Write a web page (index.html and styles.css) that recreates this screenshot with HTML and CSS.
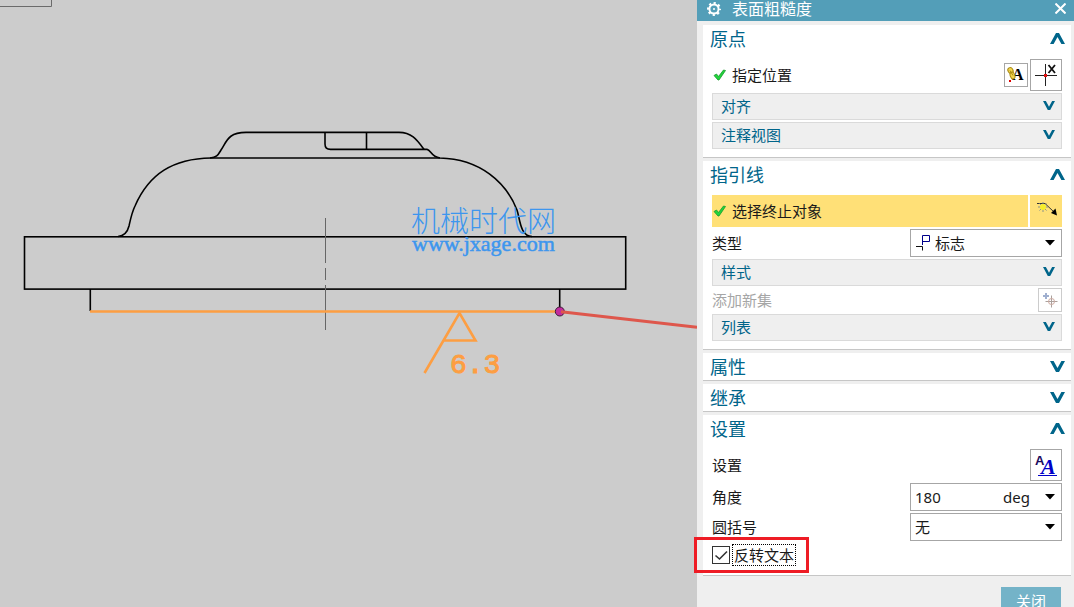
FILE: index.html
```html
<!DOCTYPE html>
<html lang="zh-CN">
<head>
  <meta charset="UTF-8" />
  <title>表面粗糙度</title>
  <link rel="stylesheet" href="styles.css">
</head>
<body>
  <!-- shared shapes -->
  <svg class="symbols" aria-hidden="true">
    <symbol id="chevron" viewBox="0 0 15 11">
      <path d="M0 0h3.600l3.900 7L11.400 0H15L9 11H6z" />
    </symbol>
    <symbol id="check" viewBox="0 0 13 12">
      <path d="M1 6.500L3.500 5l2 2.500L10.500 1 12.500 1.500 6 11H5z" fill="#22d43c" stroke="#159a2b" stroke-width="0.800" />
    </symbol>
    <symbol id="caret" viewBox="0 0 10 6">
      <path d="M0 0h10L5 5.500z" />
    </symbol>
  </svg>

  <main class="canvas">
    <svg class="drawing" viewBox="0 0 697 607" preserveAspectRatio="xMinYMin meet">
      <path class="frame" d="M0 6.500H51.500V0" />

      <!-- part outline -->
      <g class="outline">
        <rect x="24.500" y="236.800" width="601.200" height="52.300" />
        <path d="M90.300 289V311M559.700 289V308" />
        <path d="M118 236.500C124 236 127.500 232 129 226C131 217 132 212 135 206C149 174 173 158.500 211 158H440" />
        <path d="M210 158C217 157.500 218 155 221 150C227 141 228 132.500 246 132.400H399C412 132.400 417 140 424 149.300" />
        <path d="M325 132.400V144Q325 149.400 330.500 149.400H427C431 150 431 157 440 158C480 159 506 182 517 210C520 219 520 236 532 236.500" />
        <path d="M366.500 132.400V149.400" />
      </g>
      <path class="center-line" d="M325.500 218V263M325.500 268V280M325.500 285V330" />

      <!-- watermark -->
      <text class="mark-name" x="411" y="232">机械时代网</text>
      <text class="mark-url" x="412" y="251">www.jxage.com</text>

      <!-- roughness symbol and leader -->
      <path class="rough" d="M90 311.500H559" />
      <path class="rough" d="M424.500 373L459.500 313L475.500 340.500H443.500" />
      <text class="rough-value" x="450" y="373">6.3</text>
      <circle cx="559.800" cy="311.500" r="4.500" fill="#c22c9f" stroke="#3c2038" />
      <path d="M561 311.800L697 327.300" stroke="#de574c" stroke-width="3" />
    </svg>
  </main>

  <aside class="panel">
    <header class="panel-title">
      <svg class="gear" viewBox="0 0 14 14">
        <circle cx="7" cy="7" r="4.600" fill="none" stroke="#fff" stroke-width="2" />
        <circle cx="7" cy="7" r="6" fill="none" stroke="#fff" stroke-width="2" stroke-dasharray="2.200 2.512" stroke-dashoffset="1.100" />
        <circle cx="7" cy="7" r="1" fill="#fff" />
      </svg>
      <h1>表面粗糙度</h1>
      <button class="close-x" aria-label="关闭窗口">
        <svg viewBox="0 0 11 11"><path d="M.500 .500l10 10M10.500 .500l-10 10" stroke="#fff" stroke-width="2" /></svg>
      </button>
    </header>

    <div class="panel-body">
      <section class="group">
        <button class="group-head">原点<svg class="chevron up"><use href="#chevron" /></svg></button>
        <div class="rows">
          <div class="row">
            <span class="step"><svg class="check"><use href="#check" /></svg>指定位置</span>
            <button class="icon-btn small" aria-label="关联注释">
              <svg viewBox="0 0 22 22">
                <text class="glyph-serif" x="7" y="16" font-size="16">A</text>
                <g fill="#f1d44c" stroke="#a98a12">
                  <ellipse cx="5.500" cy="6.500" rx="2.500" ry="3" transform="rotate(-30 5.500 6.500)" />
                  <ellipse cx="7.500" cy="11.500" rx="2.300" ry="3.500" transform="rotate(-20 7.500 11.500)" />
                  <path d="M5 6.500l3 5" />
                </g>
                <path d="M4 16h2v2H4z" fill="#d00" />
              </svg>
            </button>
            <button class="icon-btn" aria-label="指定位置">
              <svg viewBox="0 0 30 30">
                <path d="M4 15.500H26M14.500 4V26" stroke="#222" fill="none" />
                <path d="M13 14h3v3h-3z" fill="#e01010" />
                <path d="M17.500 5L24 13M24 5L17.500 13" stroke="#111" stroke-width="1.800" />
              </svg>
            </button>
          </div>
          <button class="sub">对齐<svg class="chevron"><use href="#chevron" /></svg></button>
          <button class="sub">注释视图<svg class="chevron"><use href="#chevron" /></svg></button>
        </div>
      </section>

      <section class="group">
        <button class="group-head">指引线<svg class="chevron up"><use href="#chevron" /></svg></button>
        <div class="rows">
          <div class="row">
            <span class="step active"><svg class="check"><use href="#check" /></svg>选择终止对象</span>
            <button class="icon-btn active" aria-label="选择终止对象">
              <svg viewBox="0 0 30 30">
                <path d="M6 7.500H14L23 16" stroke="#333" fill="none" />
                <path d="M26 19.500L20 17 24.500 12.500z" fill="#000" />
                <path d="M12 6v10M7 11h10M8.500 7.500l7 7M15.500 7.500l-7 7" stroke="#8a938a" />
                <circle cx="12" cy="11" r="3" fill="#f6ee2c" />
              </svg>
            </button>
          </div>
          <div class="row">
            <label for="leader-type">类型</label>
            <div class="field with-icon">
              <svg class="flag" viewBox="0 0 15 16">
                <path d="M6.500 10V.500H13.500V6.500H6.500" fill="none" stroke="#00008b" />
                <path d="M0 11.500H6.500V15.500" fill="none" stroke="#111" />
              </svg>
              <select id="leader-type"><option>标志</option></select>
              <svg class="caret"><use href="#caret" /></svg>
            </div>
          </div>
          <button class="sub">样式<svg class="chevron"><use href="#chevron" /></svg></button>
          <div class="row">
            <span class="disabled">添加新集</span>
            <button class="icon-btn small off" aria-label="添加新集" disabled>
              <svg viewBox="0 0 22 22">
                <path d="M4 7h6M7 4v6" stroke="#9fafcf" stroke-width="2" />
                <path d="M12.500 6.500v12M6.500 12.500h12" stroke="#aaa09c" />
                <circle cx="12.500" cy="12.500" r="3" fill="none" stroke="#cda9a0" />
              </svg>
            </button>
          </div>
          <button class="sub">列表<svg class="chevron"><use href="#chevron" /></svg></button>
        </div>
      </section>

      <section class="group">
        <button class="group-head">属性<svg class="chevron"><use href="#chevron" /></svg></button>
      </section>

      <section class="group">
        <button class="group-head">继承<svg class="chevron"><use href="#chevron" /></svg></button>
      </section>

      <section class="group">
        <button class="group-head">设置<svg class="chevron up"><use href="#chevron" /></svg></button>
        <div class="rows">
          <div class="row">
            <span>设置</span>
            <button class="icon-btn" aria-label="设置">
              <svg viewBox="0 0 30 30">
                <text class="glyph-sans" x="4" y="15" font-size="13">A</text>
                <text class="glyph-italic" x="10" y="24" font-size="22">A</text>
                <path d="M7 25.500H26" stroke="#0000c8" />
              </svg>
            </button>
          </div>
          <div class="row">
            <label for="angle">角度</label>
            <div class="field">
              <input type="text" id="angle" value="180">
              <select class="unit" aria-label="角度单位"><option>deg</option></select>
              <svg class="caret"><use href="#caret" /></svg>
            </div>
          </div>
          <div class="row">
            <label for="paren">圆括号</label>
            <div class="field">
              <select id="paren"><option>无</option></select>
              <svg class="caret"><use href="#caret" /></svg>
            </div>
          </div>
          <div class="row check-row">
            <input type="checkbox" id="reverse" checked>
            <svg class="tick" viewBox="0 0 18 18"><path d="M3.500 9.500L7.500 13L15 5.500" /></svg>
            <label for="reverse" class="focused">反转文本</label>
            <div class="highlight"></div>
          </div>
        </div>
      </section>

      <footer class="actions">
        <button class="close-btn">关闭</button>
      </footer>
    </div>
  </aside>
</body>
</html>
```

FILE: styles.css
```css
* {
  box-sizing: border-box;
}
body {
  margin: 0;
  height: 100vh;
  display: flex;
  overflow: hidden;
  background: #cccccc;
  font-family: "Noto Sans", "Noto Sans CJK SC", sans-serif;
  font-size: 15px;
  line-height: 20px;
  color: #1a1a1a;
}
button,
input,
select {
  font: inherit;
  color: inherit;
  margin: 0;
  padding: 0;
  border: none;
  border-radius: 0;
  background: none;
}
svg {
  display: block;
  flex: none;
}
.symbols {
  position: absolute;
  width: 0;
  height: 0;
}

/* drawing area */
.canvas {
  flex: 1;
  min-width: 0;
}
.drawing {
  width: 100%;
}
.frame {
  fill: none;
  stroke: #6b6b6b;
}
.outline {
  fill: none;
  stroke: #000;
  stroke-width: 1.6px;
}
.center-line {
  stroke: #666;
}
.rough {
  fill: none;
  stroke: #fd9e42;
  stroke-width: 2.6px;
}
.rough-value {
  font-family: "Liberation Mono", monospace;
  font-size: 28px;
  fill: #fd9e42;
  stroke: #fd9e42;
}
.mark-name {
  font-family: "Noto Sans CJK SC", sans-serif;
  font-size: 29px;
  font-weight: 300;
  fill: #3d96ee;
}
.mark-url {
  font-family: "Liberation Serif", serif;
  font-size: 22px;
  fill: #3d96ee;
  stroke: #3d96ee;
  stroke-width: 0.5px;
}

/* dialog panel */
.panel {
  flex: 0 0 377px;
  background: #efefef;
}
.panel-title {
  display: flex;
  align-items: center;
  height: 21px;
  padding: 0 8px 4px 10px;
  background: #539eb8;
  color: #fff;
}
.panel-title h1 {
  flex: 1;
  margin: 0 0 0 11px;
  font-size: 16px;
  line-height: 16px;
  font-weight: 400;
}
.gear {
  width: 14px;
  height: 14px;
}
.close-x svg {
  width: 11px;
  height: 11px;
}
.panel-body {
  display: flex;
  flex-direction: column;
  gap: 3px;
  padding: 4px 3px 0 6px;
}
.group {
  background: #fff;
  border-bottom: 1px solid #c6c6c6;
}
.group-head {
  display: flex;
  align-items: center;
  justify-content: space-between;
  width: 100%;
  height: 27px;
  padding: 0 6px 0 7px;
  font-size: 18px;
  color: #00658a;
}
.chevron {
  width: 15px;
  height: 11px;
  fill: #00658a;
}
.up {
  transform: rotate(180deg);
}
.rows {
  display: flex;
  flex-direction: column;
  gap: 2px;
  padding: 7px 9px 8px;
}
.row {
  display: flex;
  align-items: center;
  justify-content: space-between;
  gap: 2px;
}
.step {
  display: flex;
  align-items: center;
  flex: 1;
  height: 32px;
  gap: 6px;
  padding-left: 1px;
}
.check {
  width: 13px;
  height: 12px;
}
.active {
  background: #ffe077;
}
.sub {
  display: flex;
  align-items: center;
  justify-content: space-between;
  height: 27px;
  padding: 0 6px 2px 8px;
  border: 1px solid #dadada;
  background: #efefef;
  color: #00658a;
}
.sub .chevron {
  width: 12px;
  height: 9px;
}
.icon-btn {
  width: 32px;
  height: 32px;
  border: 1px solid #a6a6a6;
  background: #fff;
}
.icon-btn.small {
  width: 24px;
  height: 24px;
}
.icon-btn.active {
  border-color: #ffe077;
  background: #ffe077;
}
.icon-btn.off {
  border-color: #cccccc;
}
.disabled {
  color: #a6a6a6;
}
.glyph-serif {
  font-family: "Liberation Serif", serif;
  font-weight: bold;
}
.glyph-sans {
  font-family: "Liberation Sans", sans-serif;
  font-weight: bold;
  fill: #1c0a5c;
}
.glyph-italic {
  font-family: "Liberation Serif", serif;
  font-weight: bold;
  font-style: italic;
  fill: #0000c8;
}

/* fields */
.field {
  position: relative;
  display: flex;
  width: 152px;
  height: 28px;
  border: 1px solid #a6a6a6;
  background: #fff;
}
.field select {
  flex: 1;
  min-width: 0;
  padding-left: 4px;
  appearance: none;
}
.field input {
  width: 88px;
  padding-left: 4px;
}
.field.with-icon select {
  padding-left: 24px;
}
.flag {
  position: absolute;
  left: 5px;
  top: 5px;
  width: 15px;
  height: 16px;
}
.caret {
  position: absolute;
  right: 6px;
  top: 10px;
  width: 10px;
  height: 6px;
  pointer-events: none;
}
.check-row {
  position: relative;
  justify-content: flex-start;
  height: 24px;
}
.check-row input {
  width: 18px;
  height: 18px;
  border: 1px solid #333;
  background: #fff;
  appearance: none;
}
.tick {
  position: absolute;
  left: 0;
  top: 3px;
  width: 18px;
  height: 18px;
  fill: none;
  stroke: #333;
  stroke-width: 1.6px;
  pointer-events: none;
}
.focused {
  padding: 0 1px;
  border: 1px dotted #000;
}
.highlight {
  position: absolute;
  left: -18px;
  top: -6px;
  width: 115px;
  height: 36px;
  border: 3px solid #ee1c25;
  pointer-events: none;
}

.actions {
  display: flex;
  justify-content: flex-end;
  padding: 8px 10px 8px 0;
}
.close-btn {
  width: 60px;
  height: 28px;
  background: #74b3c8;
  color: #fff;
}
```
